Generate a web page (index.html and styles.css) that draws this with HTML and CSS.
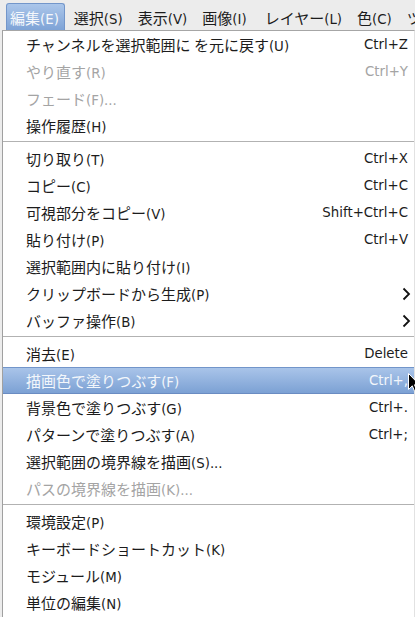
FILE: index.html
```html
<!DOCTYPE html>
<html lang="ja">
<head>
<meta charset="utf-8">
<link rel="stylesheet" href="styles.css">
</head>
<body>
<div class="menubar">
  <span class="mb-item active"><span class="jp">編集</span>(E)</span>
  <span class="mb-item"><span class="jp">選択</span>(S)</span>
  <span class="mb-item"><span class="jp">表示</span>(V)</span>
  <span class="mb-item"><span class="jp">画像</span>(I)</span>
  <span class="mb-item wide"><span class="jp">レイヤー</span>(L)</span>
  <span class="mb-item"><span class="jp">色</span>(C)</span>
  <span class="mb-item"><span class="jp">ツール</span>(T)</span>
</div>
<ul class="menu">
  <li class="row"><span class="label"><span class="jp">チャンネルを選択範囲に を元に戻す</span>(U)</span><span class="accel">Ctrl+Z</span></li>
  <li class="row disabled"><span class="label"><span class="jp">やり直す</span>(R)</span><span class="accel">Ctrl+Y</span></li>
  <li class="row disabled"><span class="label"><span class="jp">フェード</span>(F)...</span></li>
  <li class="row"><span class="label"><span class="jp">操作履歴</span>(H)</span></li>
  <li class="sep"></li>
  <li class="row"><span class="label"><span class="jp">切り取り</span>(T)</span><span class="accel">Ctrl+X</span></li>
  <li class="row"><span class="label"><span class="jp">コピー</span>(C)</span><span class="accel">Ctrl+C</span></li>
  <li class="row"><span class="label"><span class="jp">可視部分をコピー</span>(V)</span><span class="accel">Shift+Ctrl+C</span></li>
  <li class="row"><span class="label"><span class="jp">貼り付け</span>(P)</span><span class="accel">Ctrl+V</span></li>
  <li class="row"><span class="label"><span class="jp">選択範囲内に貼り付け</span>(I)</span></li>
  <li class="row"><span class="label"><span class="jp">クリップボードから生成</span>(P)</span><svg class="chev" width="10" height="14" viewBox="0 0 10 14"><path d="M2.5 1.5 L8 7 L2.5 12.5" fill="none" stroke="#111" stroke-width="1.8"/></svg></li>
  <li class="row"><span class="label"><span class="jp">バッファ操作</span>(B)</span><svg class="chev" width="10" height="14" viewBox="0 0 10 14"><path d="M2.5 1.5 L8 7 L2.5 12.5" fill="none" stroke="#111" stroke-width="1.8"/></svg></li>
  <li class="sep"></li>
  <li class="row"><span class="label"><span class="jp">消去</span>(E)</span><span class="accel">Delete</span></li>
  <li class="row hl"><span class="label"><span class="jp">描画色で塗りつぶす</span>(F)</span><span class="accel">Ctrl+,</span></li>
  <li class="row"><span class="label"><span class="jp">背景色で塗りつぶす</span>(G)</span><span class="accel">Ctrl+.</span></li>
  <li class="row"><span class="label"><span class="jp">パターンで塗りつぶす</span>(A)</span><span class="accel">Ctrl+;</span></li>
  <li class="row"><span class="label"><span class="jp">選択範囲の境界線を描画</span>(S)...</span></li>
  <li class="row disabled"><span class="label"><span class="jp">パスの境界線を描画</span>(K)...</span></li>
  <li class="sep"></li>
  <li class="row"><span class="label"><span class="jp">環境設定</span>(P)</span></li>
  <li class="row"><span class="label"><span class="jp">キーボードショートカット</span>(K)</span></li>
  <li class="row"><span class="label"><span class="jp">モジュール</span>(M)</span></li>
  <li class="row"><span class="label"><span class="jp">単位の編集</span>(N)</span></li>
</ul>
<svg class="cursor" width="12" height="20" viewBox="0 0 12 20"><path d="M0.5 0.5 L0.5 16.5 L4.3 12.8 L6.8 18.8 L9 17.8 L6.5 11.8 L11.5 11.8 Z" fill="#000" stroke="#fff" stroke-width="1"/></svg>
</body>
</html>
```
FILE: styles.css
```css
html, body {
  margin: 0;
  padding: 0;
}
body {
  width: 415px;
  height: 617px;
  overflow: hidden;
  background: #ececec;
  font-family: "DejaVu Sans", "Noto Sans CJK JP", sans-serif;
  font-size: 13.33px;
  color: #1c1c1c;
  position: relative;
}
.jp {
  font-family: "Noto Sans CJK JP", sans-serif;
  font-size: 15px;
}
.menubar {
  height: 30px;
  display: flex;
  align-items: flex-end;
  padding-left: 6px;
  gap: 5px;
  white-space: nowrap;
  overflow: hidden;
}
.mb-item {
  height: 27px;
  box-sizing: border-box;
  display: flex;
  align-items: baseline;
  padding: 4px 5px 0 3px;
  border: 1px solid transparent;
  border-bottom: none;
  line-height: 20px;
  flex-shrink: 0;
}
.mb-item.wide {
  padding-left: 6px;
}
.mb-item.active {
  background: linear-gradient(#abc6ea, #7ea3d6);
  border-color: #7396ca;
  border-radius: 3px 3px 0 0;
  color: #f4f7fb;
}
.menu {
  list-style: none;
  margin: 0 0 0 2px;
  padding: 0;
  width: 413px;
  box-sizing: border-box;
  background: #fff;
  border-top: 1px solid #a6a6a6;
  border-left: 1px solid #a0a0a0;
  border-right: 1px solid #e2e2e2;
  height: 587px;
}
.row {
  height: 27px;
  box-sizing: border-box;
  display: flex;
  align-items: center;
  justify-content: space-between;
  padding: 0 6px 0 23px;
  white-space: nowrap;
}
.label {
  display: flex;
  align-items: baseline;
}
.accel {
  color: #1c1c1c;
}
.disabled .label,
.disabled .accel {
  color: #a4a4a4;
}
.chev {
  display: block;
  margin-right: -3px;
}
.sep {
  height: 6px;
  box-sizing: border-box;
  padding-top: 2px;
}
.sep::before {
  content: "";
  display: block;
  height: 1px;
  background: #b2b2b2;
}
.row.hl {
  background: linear-gradient(#a9c4e9, #7ca1d4);
  border-top: 1px solid #7295ca;
  border-bottom: 1px solid #6a8cc2;
  color: #f2f6fb;
}
.row.hl .accel {
  color: #f2f6fb;
}
.cursor {
  position: absolute;
  left: 408px;
  top: 373px;
}
```
